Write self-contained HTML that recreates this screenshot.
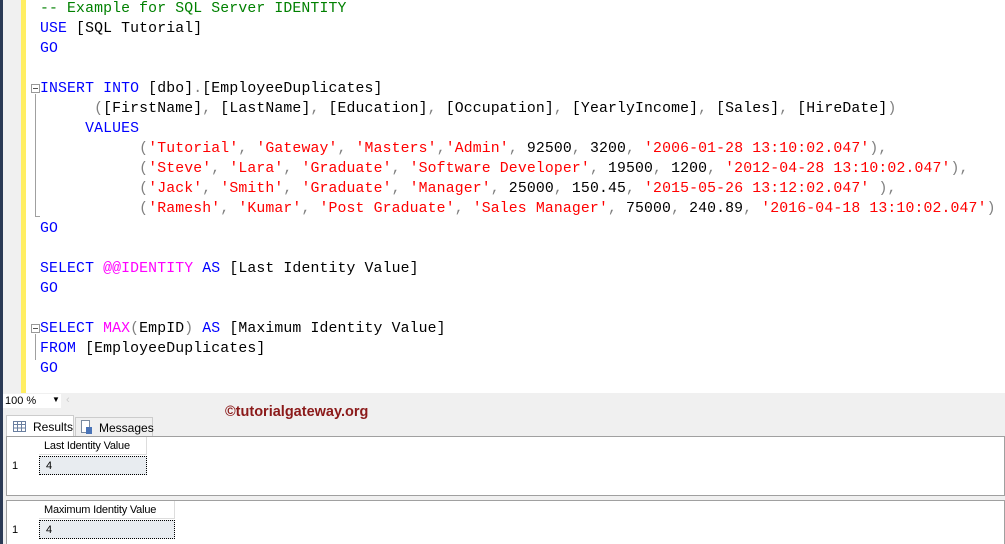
<!DOCTYPE html>
<html><head><style>
*{margin:0;padding:0;box-sizing:border-box}
body{width:1005px;height:544px;overflow:hidden;background:#fff;position:relative;font-family:"Liberation Sans",sans-serif}
.strip{position:absolute;left:0;top:0;width:3px;height:544px;background:#2b3a55}
.gut{position:absolute;left:3px;top:0;width:18px;height:393px;background:#f0f0f0}
.yel{position:absolute;left:21px;top:0;width:5px;height:393px;background:#ffee62}
.code{position:absolute;left:40px;top:-1.5px;font-family:"Liberation Mono",monospace;font-size:14.8px;letter-spacing:0.135px;line-height:20px;white-space:pre;color:#000}
.k{color:#0000ff}.c{color:#008000}.s{color:#ff0000}.g{color:#808080}.m{color:#ff00ff}
.box{position:absolute;left:31px;width:9px;height:9px;border:1px solid #999;background:#fff}
.box:after{content:"";position:absolute;left:1px;top:3px;width:5px;height:1px;background:#555}
.vl{position:absolute;left:35px;width:1px;background:#a0a0a0}
.bottom{position:absolute;left:3px;top:393px;width:1002px;height:151px;background:#f0f0f0}
.zoom{position:absolute;left:3px;top:394px;width:58px;height:14px;background:#fff;font-size:11px;line-height:14px;padding-left:2px}
.tab{position:absolute;top:415px;height:22px;font-size:12px;line-height:22px;border:1px solid #ccc;border-bottom:none}
.grid{position:absolute;left:6px;background:#fff;border:1px solid #a0a0a0;font-size:11px}
.cell{position:absolute;line-height:18px}
</style></head><body>
<div class="strip"></div><div class="gut"></div><div class="yel"></div>
<div class="vl" style="top:94px;height:123px"></div>
<div style="position:absolute;left:35px;top:216px;width:5px;height:1px;background:#a0a0a0"></div>
<div class="vl" style="top:334px;height:26px"></div>
<div class="box" style="top:84px"></div>
<div class="box" style="top:324px"></div>
<div class="code"><span class="c">-- Example for SQL Server IDENTITY</span>
<span class="k">USE</span> [SQL Tutorial]
<span class="k">GO</span>

<span class="k">INSERT INTO</span> [dbo]<span class="g">.</span>[EmployeeDuplicates]
      <span class="g">(</span>[FirstName]<span class="g">,</span> [LastName]<span class="g">,</span> [Education]<span class="g">,</span> [Occupation]<span class="g">,</span> [YearlyIncome]<span class="g">,</span> [Sales]<span class="g">,</span> [HireDate]<span class="g">)</span>
     <span class="k">VALUES</span>
           <span class="g">(</span><span class="s">'Tutorial'</span><span class="g">,</span> <span class="s">'Gateway'</span><span class="g">,</span> <span class="s">'Masters'</span><span class="g">,</span><span class="s">'Admin'</span><span class="g">,</span> 92500<span class="g">,</span> 3200<span class="g">,</span> <span class="s">'2006-01-28 13:10:02.047'</span><span class="g">),</span>
           <span class="g">(</span><span class="s">'Steve'</span><span class="g">,</span> <span class="s">'Lara'</span><span class="g">,</span> <span class="s">'Graduate'</span><span class="g">,</span> <span class="s">'Software Developer'</span><span class="g">,</span> 19500<span class="g">,</span> 1200<span class="g">,</span> <span class="s">'2012-04-28 13:10:02.047'</span><span class="g">),</span>
           <span class="g">(</span><span class="s">'Jack'</span><span class="g">,</span> <span class="s">'Smith'</span><span class="g">,</span> <span class="s">'Graduate'</span><span class="g">,</span> <span class="s">'Manager'</span><span class="g">,</span> 25000<span class="g">,</span> 150.45<span class="g">,</span> <span class="s">'2015-05-26 13:12:02.047'</span> <span class="g">),</span>
           <span class="g">(</span><span class="s">'Ramesh'</span><span class="g">,</span> <span class="s">'Kumar'</span><span class="g">,</span> <span class="s">'Post Graduate'</span><span class="g">,</span> <span class="s">'Sales Manager'</span><span class="g">,</span> 75000<span class="g">,</span> 240.89<span class="g">,</span> <span class="s">'2016-04-18 13:10:02.047'</span><span class="g">)</span>
<span class="k">GO</span>

<span class="k">SELECT</span> <span class="m">@@IDENTITY</span> <span class="k">AS</span> [Last Identity Value]
<span class="k">GO</span>

<span class="k">SELECT</span> <span class="m">MAX</span><span class="g">(</span>EmpID<span class="g">)</span> <span class="k">AS</span> [Maximum Identity Value]
<span class="k">FROM</span> [EmployeeDuplicates]
<span class="k">GO</span></div>
<div class="bottom"></div>
<div class="zoom">100 %<span style="position:absolute;left:49px;top:-1px;font-size:8px">▼</span></div>
<div style="position:absolute;left:66px;top:394px;font-size:11px;color:#ccc">‹</div>
<div class="tab" style="left:6px;width:68px;background:#fff;border-color:#ccc">
<svg style="position:absolute;left:6px;top:5px" width="13" height="11"><rect x="0.5" y="0.5" width="12" height="10" fill="#fff" stroke="#6a7fa0"/><path d="M0 3.5H13M0 7H13M4.5 0V11M8.5 0V11" stroke="#6a7fa0"/></svg>
<span style="position:absolute;left:26px">Results</span></div>
<div class="tab" style="left:75px;width:78px;top:417px;height:20px;line-height:20px;background:#f0f0f0">
<svg style="position:absolute;left:5px;top:2px" width="12" height="15"><rect x="0.5" y="0.5" width="8" height="12" fill="#fff" stroke="#7a8aa0"/><rect x="5" y="7" width="6" height="7" fill="#4a74b8"/></svg>
<span style="position:absolute;left:23px">Messages</span></div>
<div style="position:absolute;left:225px;top:404px;font-size:14.5px;font-weight:bold;color:#8b1a1a">©tutorialgateway.org</div>
<div class="grid" style="top:436px;width:999px;height:60px">
<div class="cell" style="left:32px;top:0;width:108px;height:18px;border-right:1px solid #ddd;border-bottom:1px solid #ddd;padding-left:5px;letter-spacing:-0.2px">Last Identity Value</div>
<div class="cell" style="left:5px;top:20px">1</div>
<div class="cell" style="left:32px;top:19px;width:108px;height:19px;background:#e8ecf0;border:1px dotted #000;padding-left:6px">4</div>
</div>
<div class="grid" style="top:500px;width:999px;height:44px;border-bottom:none">
<div class="cell" style="left:32px;top:0;width:136px;height:18px;border-right:1px solid #ddd;border-bottom:1px solid #ddd;padding-left:5px;letter-spacing:-0.2px">Maximum Identity Value</div>
<div class="cell" style="left:5px;top:20px">1</div>
<div class="cell" style="left:32px;top:19px;width:136px;height:19px;background:#e8ecf0;border:1px dotted #000;padding-left:6px">4</div>
</div>
</body></html>
